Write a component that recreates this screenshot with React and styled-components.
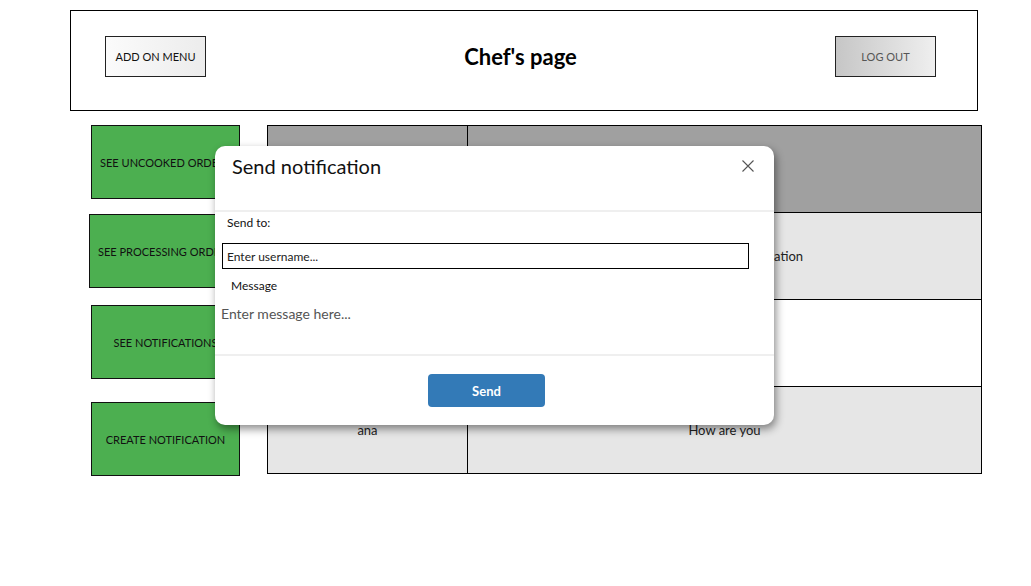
import React from 'react';
import styled, { createGlobalStyle } from 'styled-components';

const GlobalStyle = createGlobalStyle`
  body {
    margin: 0;
    background: #fff;
    font-family: Lato, "Noto Sans", sans-serif;
    color: #111;
  }
`;

const rows = [
  { from: 'admin', text: 'You have a new notification', shade: true },
  { from: 'ana', text: 'Hello', shade: false },
  { from: 'ana', text: 'How are you', shade: true },
];

const sideButtons = [
  { label: 'SEE UNCOOKED ORDERS', top: 0 },
  { label: 'SEE PROCESSING ORDERS', top: 15, wide: true },
  { label: 'SEE NOTIFICATIONS', top: 17 },
  { label: 'CREATE NOTIFICATION', top: 23 },
];

export default function App() {
  return (
    <Page>
      <GlobalStyle />
      <Header>
        <HeaderButton>ADD ON MENU</HeaderButton>
        <Title>Chef's page</Title>
        <HeaderButton $dark>LOG OUT</HeaderButton>
      </Header>

      <Main>
        <SideNav>
          {sideButtons.map(b => (
            <SideButton key={b.label} $top={b.top} $wide={b.wide}>{b.label}</SideButton>
          ))}
        </SideNav>

        <Table>
          <thead>
            <tr>
              <Th $first />
              <Th />
            </tr>
          </thead>
          <tbody>
            {rows.map((r, i) => (
              <Row key={i} $shade={r.shade}>
                <Td $first>{r.from}</Td>
                <Td>{r.text}</Td>
              </Row>
            ))}
          </tbody>
        </Table>
      </Main>

      <Modal>
        <ModalHeader>
          <ModalTitle>Send notification</ModalTitle>
          <CloseButton aria-label="close">
            <svg width="12" height="12" viewBox="0 0 12 12">
              <path d="M0.5 0.5 L11.5 11.5 M11.5 0.5 L0.5 11.5" stroke="#555" strokeWidth="1.1" fill="none" />
            </svg>
          </CloseButton>
        </ModalHeader>
        <ModalBody>
          <Label>Send to:</Label>
          <UserInput placeholder="Enter username..." />
          <Label $indent>Message</Label>
          <MessageArea placeholder="Enter message here..." />
        </ModalBody>
        <ModalFooter>
          <SendButton>Send</SendButton>
        </ModalFooter>
      </Modal>
    </Page>
  );
}

const Page = styled.div`
  position: relative;
  width: 1031px;
  min-height: 586px;
  padding: 10px 0 0 70px;
  box-sizing: border-box;
`;

const Header = styled.header`
  width: 908px;
  height: 101px;
  box-sizing: border-box;
  border: 1px solid #000;
  padding: 25px 41px 0 34px;
  display: flex;
  align-items: flex-start;
  justify-content: space-between;
`;

const HeaderButton = styled.button`
  width: 101px;
  height: 41px;
  border: 1px solid #222;
  border-radius: 0;
  font-family: inherit;
  font-size: 11px;
  color: ${p => (p.$dark ? '#555' : '#111')};
  background: ${p => (p.$dark
    ? 'linear-gradient(to right, #c6c6c6, #efefef)'
    : 'linear-gradient(to right, #fbfbfb, #ececec)')};
  padding: 0;
`;

const Title = styled.h1`
  margin: 0;
  font-size: 22px;
  font-weight: 700;
  line-height: 41px;
  color: #000;
`;

const Main = styled.div`
  display: flex;
  align-items: flex-start;
  margin-top: 14px;
  padding-left: 21px;
`;

const SideNav = styled.nav`
  width: 149px;
  display: flex;
  flex-direction: column;
`;

const SideButton = styled.button`
  width: ${p => (p.$wide ? '153px' : '149px')};
  height: 74px;
  margin-top: ${p => p.$top}px;
  margin-left: ${p => (p.$wide ? '-2px' : '0')};
  background: #4caf50;
  border: 1px solid #111;
  border-radius: 0;
  font-family: inherit;
  font-size: 11px;
  color: #111;
  padding: 0;
  white-space: nowrap;
  overflow: hidden;
`;

const Table = styled.table`
  margin-left: 27px;
  width: 715px;
  border-collapse: collapse;
  font-size: 13px;
  color: #222;
`;

const Th = styled.th`
  background: #a0a0a0;
  height: 86px;
  width: ${p => (p.$first ? '199px' : 'auto')};
  border: 1px solid #000;
  font-weight: 400;
  padding: 0;
`;

const Row = styled.tr`
  background: ${p => (p.$shade ? '#e6e6e6' : '#fff')};
`;

const Td = styled.td`
  height: 86px;
  border: 1px solid #000;
  text-align: center;
  vertical-align: middle;
  padding: 0;
`;

const Modal = styled.div`
  position: absolute;
  left: 215px;
  top: 146px;
  width: 559px;
  height: 279px;
  background: #fff;
  border-radius: 10px;
  box-shadow: 2px 4px 9px rgba(0, 0, 0, 0.45);
  display: flex;
  flex-direction: column;
  overflow: hidden;
`;

const ModalHeader = styled.div`
  height: 66px;
  flex-shrink: 0;
  box-sizing: border-box;
  border-bottom: 2px solid #efefef;
  display: flex;
  align-items: flex-start;
  justify-content: space-between;
  padding: 10px 20px 0 17px;
`;

const ModalTitle = styled.h2`
  margin: 0;
  font-size: 20px;
  font-weight: 400;
  line-height: 20px;
  color: #111;
`;

const CloseButton = styled.button`
  border: none;
  background: none;
  padding: 0;
  margin-top: 4px;
  width: 12px;
  height: 12px;
  display: flex;
`;

const ModalBody = styled.div`
  height: 144px;
  flex-shrink: 0;
  box-sizing: border-box;
  border-bottom: 2px solid #efefef;
  display: flex;
  flex-direction: column;
  padding-top: 3px;
`;

const Label = styled.label`
  font-size: 12px;
  line-height: 16px;
  margin-left: ${p => (p.$indent ? '16px' : '12px')};
  margin-top: ${p => (p.$indent ? '9px' : '0')};
  color: #111;
`;

const UserInput = styled.input`
  margin: 12px 0 0 7px;
  width: 527px;
  height: 26px;
  box-sizing: border-box;
  border: 1px solid #000;
  padding: 0 4px;
  font-family: inherit;
  font-size: 12px;
  outline: none;
  &::placeholder {
    color: #222;
  }
`;

const MessageArea = styled.textarea`
  margin: 10px 0 0 6px;
  height: 36px;
  width: 520px;
  border: none;
  resize: none;
  padding: 0;
  font-family: inherit;
  font-size: 14px;
  line-height: 20px;
  outline: none;
  &::placeholder {
    color: #555;
  }
`;

const ModalFooter = styled.div`
  flex: 1;
  padding: 18px 0 0 213px;
`;

const SendButton = styled.button`
  width: 117px;
  height: 33px;
  border: none;
  border-radius: 4px;
  background: #337ab7;
  color: #fff;
  font-family: inherit;
  font-size: 13px;
  font-weight: 700;
`;
